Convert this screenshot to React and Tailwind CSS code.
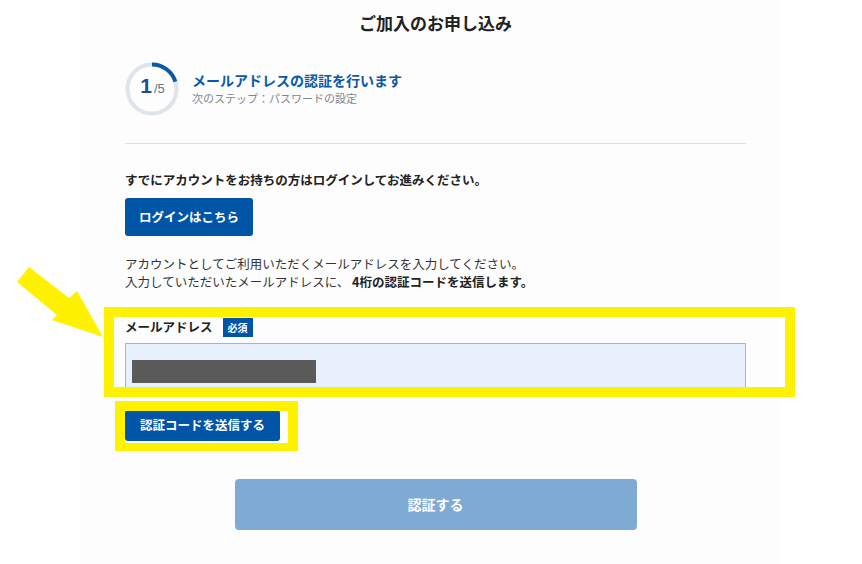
const jp = { fontFamily: '"Noto Sans CJK JP", "Noto Sans", sans-serif' };

function StepRing() {
  const r = 24.5;
  const c = 2 * Math.PI * r;
  return (
    <div className="relative h-[54px] w-[54px] shrink-0">
      <svg width="54" height="54" viewBox="0 0 54 54" className="absolute inset-0">
        <circle cx="27" cy="27" r={r} fill="none" stroke="#dfe3ea" strokeWidth="4" />
        <circle
          cx="27"
          cy="27"
          r={r}
          fill="none"
          stroke="#0a58a8"
          strokeWidth="4"
          strokeDasharray={`${c / 5} ${c}`}
          transform="rotate(-90 27 27)"
        />
      </svg>
      <div className="absolute inset-0 flex items-baseline justify-center pl-[1px] pt-[13px]">
        <span className="text-[21px] font-bold leading-none text-[#1b4f8e]" style={{ fontFamily: '"Liberation Sans", sans-serif' }}>
          1
        </span>
        <span className="ml-[2px] text-[13px] leading-none text-[#6b7483]" style={{ fontFamily: '"Liberation Sans", sans-serif' }}>
          /5
        </span>
      </div>
    </div>
  );
}

export default function App() {
  return (
    <div className="relative h-[564px] w-[862px] overflow-hidden bg-white" style={jp}>
      <div className="ml-[81px] h-full w-[699px] bg-[#fdfdfd] pl-[44px] pr-[34px] pt-[11px] text-[#222]">
        <h1 className="text-center text-[17px] font-bold leading-[24px] text-[#222]">ご加入のお申し込み</h1>

        <div className="mt-[27px] flex items-center gap-[13px]">
          <StepRing />
          <div className="-mt-[3px]">
            <p className="text-[14px] font-bold leading-[20px] text-[#0b59a8]">メールアドレスの認証を行います</p>
            <p className="text-[11px] leading-[16px] text-[#7d8595]">次のステップ：パスワードの設定</p>
          </div>
        </div>

        <div className="mt-[27px] border-t border-[#dcdfe4]" />

        <p className="mt-[27px] text-[12.5px] font-bold leading-[18px]">
          すでにアカウントをお持ちの方はログインしてお進みください。
        </p>
        <button className="mt-[9px] flex h-[38px] w-[128px] items-center justify-center rounded-[3px] bg-[#0055a6] text-[12.5px] font-bold text-white">
          ログインはこちら
        </button>

        <div className="mt-[19px] text-[12.5px] leading-[18px] text-[#333]">
          <p>アカウントとしてご利用いただくメールアドレスを入力してください。</p>
          <p>
            入力していただいたメールアドレスに、 <span className="font-bold text-[#222]">4桁の認証コードを送信します。</span>
          </p>
        </div>

        <div className="relative mt-[26px]">
          <div className="flex h-[20px] items-center gap-[10px]">
            <span className="text-[12.5px] font-bold">メールアドレス</span>
            <span className="flex h-[19px] w-[30px] items-center justify-center bg-[#0055a6] text-[10px] font-bold text-white">
              必須
            </span>
          </div>
          <div className="relative mt-[6px] h-[48px] w-full border border-[#a9b4c4] bg-[#e8f0fe]">
            <div className="absolute left-[6px] top-[16px] h-[23px] w-[184px] bg-[#5a5a5a]" />
          </div>
          <div className="pointer-events-none absolute -left-[21px] -top-[10px] h-[90px] w-[691px] border-[10px] border-[#fff200]" />
        </div>

        <div className="relative mt-[19px] w-[155px]">
          <button className="flex h-[31px] w-[155px] items-center justify-center rounded-[3px] bg-[#0055a6] text-[12.5px] font-bold text-white">
            認証コードを送信する
          </button>
          <div className="pointer-events-none absolute -left-[10px] -top-[9px] h-[50px] w-[183px] border-[10px] border-b-[8px] border-[#fff200]" />
        </div>

        <button className="mx-auto mt-[38px] flex h-[51px] w-[402px] items-center justify-center rounded-[4px] bg-[#7faad3] text-[14px] font-bold text-white">
          認証する
        </button>
      </div>

      <svg className="pointer-events-none absolute left-0 top-0" width="120" height="350" viewBox="0 0 120 350">
        <polygon points="29,267 69,298 77,291 103,337 52,320 57,315 17,282" fill="#fff200" />
      </svg>
    </div>
  );
}
